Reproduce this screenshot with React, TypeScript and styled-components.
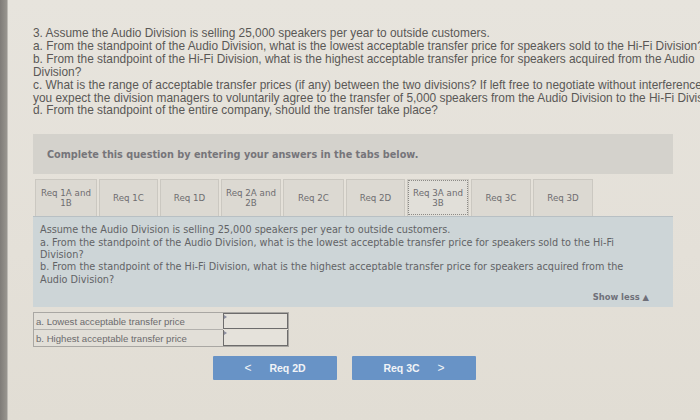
import styled, { createGlobalStyle } from "styled-components";

const Global = createGlobalStyle`
  html, body {
    margin: 0;
    padding: 0;
    width: 700px;
    height: 420px;
    overflow: hidden;
    background: #e4e0d8;
  }
`;

const Page = styled.div`
  display: flex;
  width: 700px;
  height: 420px;
  background: linear-gradient(180deg, #e7e4dd 0%, #e4e0d8 60%, #e1ddd4 100%);
`;

const Bezel = styled.div`
  width: 7px;
  flex: none;
  background: linear-gradient(90deg, #7f7c78 0%, #98958f 100%);
  border-right: 1px solid #bdbab4;
`;

const Main = styled.div`
  flex: 1;
  min-width: 0;
  padding: 27px 0 0 25px;
  overflow: hidden;
`;

const Question = styled.div`
  font-family: "Liberation Sans", Arial, sans-serif;
  font-size: 11.9px;
  line-height: 12.9px;
  color: #5a5856;
  white-space: nowrap;
  p {
    margin: 0;
  }
`;

const Prompt = styled.div`
  margin-top: 17px;
  width: 640px;
  height: 40px;
  display: flex;
  align-items: center;
  padding-left: 14px;
  box-sizing: border-box;
  background: #d4d2cc;
  font-family: "DejaVu Sans", Verdana, sans-serif;
  font-weight: bold;
  font-size: 9.7px;
  color: #76757a;
`;

const TabRow = styled.div`
  margin-top: 5px;
  width: 640px;
  display: flex;
  gap: 2px;
  padding-left: 2px;
  box-sizing: border-box;
`;

const Tab = styled.div<{ $active?: boolean; $w: number }>`
  width: ${(p) => p.$w}px;
  height: 37px;
  display: flex;
  align-items: center;
  justify-content: center;
  text-align: center;
  box-sizing: border-box;
  font-family: "DejaVu Sans", Verdana, sans-serif;
  font-size: 8.7px;
  line-height: 10px;
  color: #6e6d70;
  background: ${(p) => (p.$active ? "#e1dfd9" : "#dcd9d2")};
  border: 1px solid #cbc8c1;
  border-bottom: none;
  outline: ${(p) => (p.$active ? "1px dotted #8c8a86" : "none")};
  outline-offset: -2px;
`;

const Panel = styled.div`
  width: 640px;
  height: 91px;
  box-sizing: border-box;
  background: #cdd5d7;
  border-top: 1px solid #b8c0c4;
  padding: 7px 8px 0 7px;
  font-family: "DejaVu Sans", Verdana, sans-serif;
  font-size: 9.7px;
  line-height: 12.3px;
  color: #626366;
  display: flex;
  flex-direction: column;
  p {
    margin: 0;
    width: 605px;
  }
`;

const ShowLess = styled.div`
  margin-top: 5px;
  align-self: flex-end;
  margin-right: 16px;
  font-weight: bold;
  font-size: 8.4px;
  color: #6f7079;
`;

const Table = styled.div`
  margin-top: 5px;
  width: 254px;
  display: grid;
  grid-template-columns: 189px 65px;
  border: 1px solid #a9a7a3;
  font-family: "Liberation Sans", Arial, sans-serif;
  font-size: 9.6px;
  color: #6c6b6d;
`;

const Label = styled.div<{ $last?: boolean }>`
  height: 16px;
  display: flex;
  align-items: center;
  padding-left: 2px;
  border-bottom: ${(p) => (p.$last ? "none" : "1px solid #b3b1ad")};
  background: #e2dfd8;
`;

const Input = styled.div<{ $last?: boolean }>`
  height: 16px;
  box-sizing: border-box;
  border: 1px solid #6d6c6c;
  border-top: ${(p) => (p.$last ? "none" : "1px solid #6d6c6c")};
  background: #e5e2db;
  position: relative;
  &::before {
    content: "";
    position: absolute;
    left: 0;
    top: 1px;
    border-left: 3px solid #8d8fa0;
    border-top: 2px solid transparent;
    border-bottom: 2px solid transparent;
  }
`;

const Nav = styled.div`
  margin-top: 9px;
  margin-left: 180px;
  display: flex;
  gap: 15px;
`;

const NavButton = styled.div`
  width: 124px;
  height: 24px;
  display: flex;
  align-items: center;
  justify-content: center;
  gap: 18px;
  background: #6893c6;
  border-radius: 1px;
  font-family: "Liberation Sans", Arial, sans-serif;
  font-weight: bold;
  font-size: 10.5px;
  color: #f1f3f7;
`;

const Chevron = styled.span`
  font-weight: normal;
  font-size: 12px;
`;

const tabs: [string, number, boolean?][] = [
  ["Req 1A and 1B", 62],
  ["Req 1C", 59],
  ["Req 1D", 59],
  ["Req 2A and 2B", 60],
  ["Req 2C", 61],
  ["Req 2D", 59],
  ["Req 3A and 3B", 62, true],
  ["Req 3C", 60],
  ["Req 3D", 60],
];

export default function App() {
  return (
    <>
      <Global />
      <Page>
        <Bezel />
        <Main>
          <Question>
            <p>3. Assume the Audio Division is selling 25,000 speakers per year to outside customers.</p>
            <p>a. From the standpoint of the Audio Division, what is the lowest acceptable transfer price for speakers sold to the Hi-Fi Division?</p>
            <p>b. From the standpoint of the Hi-Fi Division, what is the highest acceptable transfer price for speakers acquired from the Audio</p>
            <p>Division?</p>
            <p>c. What is the range of acceptable transfer prices (if any) between the two divisions? If left free to negotiate without interference, would</p>
            <p>you expect the division managers to voluntarily agree to the transfer of 5,000 speakers from the Audio Division to the Hi-Fi Division?</p>
            <p>d. From the standpoint of the entire company, should the transfer take place?</p>
          </Question>
          <Prompt>Complete this question by entering your answers in the tabs below.</Prompt>
          <TabRow>
            {tabs.map(([t, w, a]) => (
              <Tab key={t} $w={w} $active={a}>
                {t.includes(" and ") ? (
                  <span>
                    {t.split(" and ")[0]} and
                    <br />
                    {t.split(" and ")[1]}
                  </span>
                ) : (
                  t
                )}
              </Tab>
            ))}
          </TabRow>
          <Panel>
            <p>Assume the Audio Division is selling 25,000 speakers per year to outside customers.</p>
            <p>a. From the standpoint of the Audio Division, what is the lowest acceptable transfer price for speakers sold to the Hi-Fi Division?</p>
            <p>b. From the standpoint of the Hi-Fi Division, what is the highest acceptable transfer price for speakers acquired from the Audio Division?</p>
            <ShowLess>Show less ▲</ShowLess>
          </Panel>
          <Table>
            <Label>a. Lowest acceptable transfer price</Label>
            <Input />
            <Label $last>b. Highest acceptable transfer price</Label>
            <Input $last />
          </Table>
          <Nav>
            <NavButton>
              <Chevron>&lt;</Chevron>
              <span>Req 2D</span>
            </NavButton>
            <NavButton>
              <span>Req 3C</span>
              <Chevron>&gt;</Chevron>
            </NavButton>
          </Nav>
        </Main>
      </Page>
    </>
  );
}
